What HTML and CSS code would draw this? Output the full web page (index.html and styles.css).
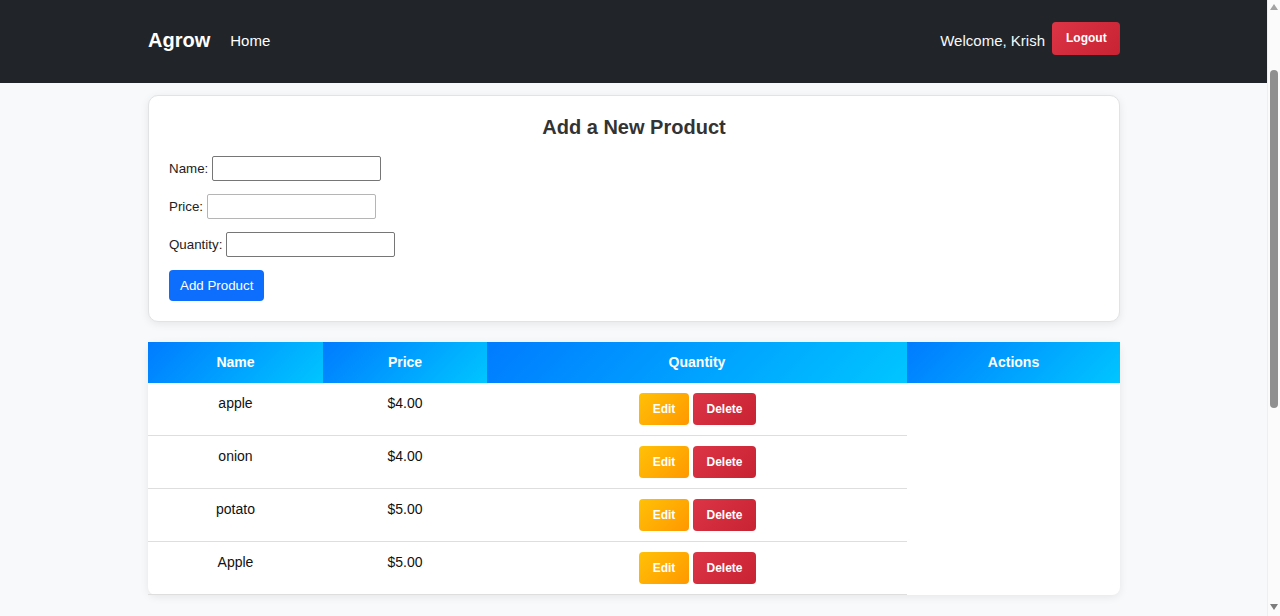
FILE: index.html
```html
<!DOCTYPE html>
<html lang="en">
<head>
<meta charset="utf-8">
<title>Agrow</title>
<link rel="stylesheet" href="styles.css">
</head>
<body>
<nav class="navbar">
  <div class="container nav-inner">
    <div class="nav-left">
      <span class="brand">Agrow</span>
      <a class="nav-link" href="#">Home</a>
    </div>
    <div class="nav-right">
      <span class="welcome">Welcome, Krish</span>
      <button class="btn btn-logout">Logout</button>
    </div>
  </div>
</nav>

<main class="container main">
  <section class="card">
    <h2 class="card-title">Add a New Product</h2>
    <form class="product-form">
      <div class="form-row"><label>Name: <input type="text" class="input"></label></div>
      <div class="form-row"><label>Price: <input type="text" class="input input-light"></label></div>
      <div class="form-row"><label>Quantity: <input type="text" class="input"></label></div>
      <button type="button" class="btn-add">Add Product</button>
    </form>
  </section>

  <table class="product-table">
    <thead>
      <tr>
        <th class="col-name">Name</th>
        <th class="col-price">Price</th>
        <th class="col-qty">Quantity</th>
        <th class="col-actions">Actions</th>
      </tr>
    </thead>
    <tbody>
      <tr>
        <td>apple</td><td>$4.00</td>
        <td><div class="actions"><button class="btn btn-edit">Edit</button><button class="btn btn-delete">Delete</button></div></td>
      </tr>
      <tr>
        <td>onion</td><td>$4.00</td>
        <td><div class="actions"><button class="btn btn-edit">Edit</button><button class="btn btn-delete">Delete</button></div></td>
      </tr>
      <tr>
        <td>potato</td><td>$5.00</td>
        <td><div class="actions"><button class="btn btn-edit">Edit</button><button class="btn btn-delete">Delete</button></div></td>
      </tr>
      <tr>
        <td>Apple</td><td>$5.00</td>
        <td><div class="actions"><button class="btn btn-edit">Edit</button><button class="btn btn-delete">Delete</button></div></td>
      </tr>
    </tbody>
  </table>
</main>

<div class="scrollbar" aria-hidden="true">
  <span class="sb-arrow sb-up"></span>
  <span class="sb-thumb"></span>
  <span class="sb-arrow sb-down"></span>
</div>
</body>
</html>
```

FILE: styles.css
```css
* { box-sizing: border-box; }

html, body {
  margin: 0;
  padding: 0;
}

body {
  font-family: "Liberation Sans", Arial, sans-serif;
  background: #f8f9fa;
  color: #212529;
  padding-right: 12px;
  min-height: 700px;
}

/* emulated browser scrollbar */
.scrollbar {
  position: fixed;
  top: 0;
  right: 0;
  width: 13px;
  height: 100%;
  background: #fbfbfb;
  border-left: 1px solid #efefef;
}

.sb-arrow {
  position: absolute;
  left: 2px;
  width: 0;
  height: 0;
  border-left: 4.5px solid transparent;
  border-right: 4.5px solid transparent;
}

.sb-up {
  top: 4px;
  border-bottom: 6px solid #a3a3a3;
}

.sb-down {
  bottom: 6px;
  border-top: 6px solid #7c7c7c;
}

.sb-thumb {
  position: absolute;
  top: 70px;
  left: 2px;
  width: 8px;
  height: 338px;
  background: #8f8f8f;
  border-radius: 4px;
}

.container {
  width: 972px;
  margin: 0 auto;
}

/* Navbar */
.navbar {
  background: #212529;
  height: 83px;
  margin-right: -12px;
  padding-right: 12px;
}

.nav-inner {
  height: 100%;
  display: flex;
  align-items: center;
  justify-content: space-between;
}

.nav-left {
  display: flex;
  align-items: center;
  gap: 20px;
  margin-bottom: 3px;
}

.brand {
  color: #fff;
  font-size: 20px;
  font-weight: bold;
}

.nav-link {
  color: #fff;
  text-decoration: none;
  font-size: 15px;
}

.nav-right {
  display: flex;
  align-items: center;
  gap: 7px;
}

.welcome {
  color: #f8f9fa;
  font-size: 15px;
  margin-bottom: 3px;
}

.btn {
  border: none;
  border-radius: 4px;
  color: #fff;
  font-family: "Liberation Sans", Arial, sans-serif;
  font-weight: bold;
  font-size: 12px;
  line-height: 14px;
  cursor: pointer;
}

.btn-logout {
  background: linear-gradient(135deg, #dc3545, #c82333);
  padding: 9px 14px 10px;
  width: 68px;
  margin-bottom: 6px;
}

/* Main */
.main {
  padding-top: 12px;
}

.card {
  background: #fff;
  border: 1px solid #e2e3e5;
  border-radius: 10px;
  box-shadow: 0 2px 8px rgba(0, 0, 0, 0.08);
  padding: 20px 20px 20px;
}

.card-title {
  margin: 0 0 18px;
  text-align: center;
  font-size: 20px;
  line-height: 22px;
  font-weight: bold;
  color: #333;
}

.product-form {
  display: flex;
  flex-direction: column;
  align-items: flex-start;
  gap: 13px;
}

.form-row label {
  font-size: 13.33px;
  color: #222;
  display: flex;
  align-items: center;
  gap: 4px;
}

.input {
  width: 169px;
  height: 25px;
  border: 1px solid #767676;
  border-radius: 2px;
  padding: 2px 4px;
  font-size: 13.33px;
  background: #fff;
}

.input-light {
  border-color: #b5b5b5;
}

.btn-add {
  background: #0d6efd;
  color: #fff;
  border: none;
  border-radius: 4px;
  font-family: "Liberation Sans", Arial, sans-serif;
  font-size: 13.33px;
  line-height: 15px;
  padding: 8px 11px;
  cursor: pointer;
}

/* Table */
.product-table {
  width: 972px;
  margin-top: 20px;
  table-layout: fixed;
  border-collapse: separate;
  border-spacing: 0;
  background: #fff;
  border-radius: 8px;
  box-shadow: 0 2px 8px rgba(0, 0, 0, 0.08);
}

.product-table th {
  background: linear-gradient(135deg, #007bff, #00c6ff);
  color: #fff;
  font-size: 14px;
  font-weight: bold;
  line-height: 16px;
  padding: 12px 8px 13px;
  height: 41px;
  text-align: center;
}

.col-name { width: 175px; }
.col-price { width: 164px; }
.col-qty { width: 420px; }
.col-actions { width: 213px; }

.product-table td {
  padding: 10px 8px 10px;
  text-align: center;
  vertical-align: top;
  font-size: 14px;
  line-height: 21px;
  color: #111;
  border-bottom: 1px solid #dedede;
}

.actions {
  display: flex;
  justify-content: center;
  gap: 4px;
  padding-left: 1px;
}

.btn-edit {
  background: linear-gradient(135deg, #ffc107, #ff9800);
  padding: 9px 13px;
  width: 50px;
}

.btn-delete {
  background: linear-gradient(135deg, #dc3545, #c82333);
  padding: 9px 13px;
  width: 63px;
}
```
